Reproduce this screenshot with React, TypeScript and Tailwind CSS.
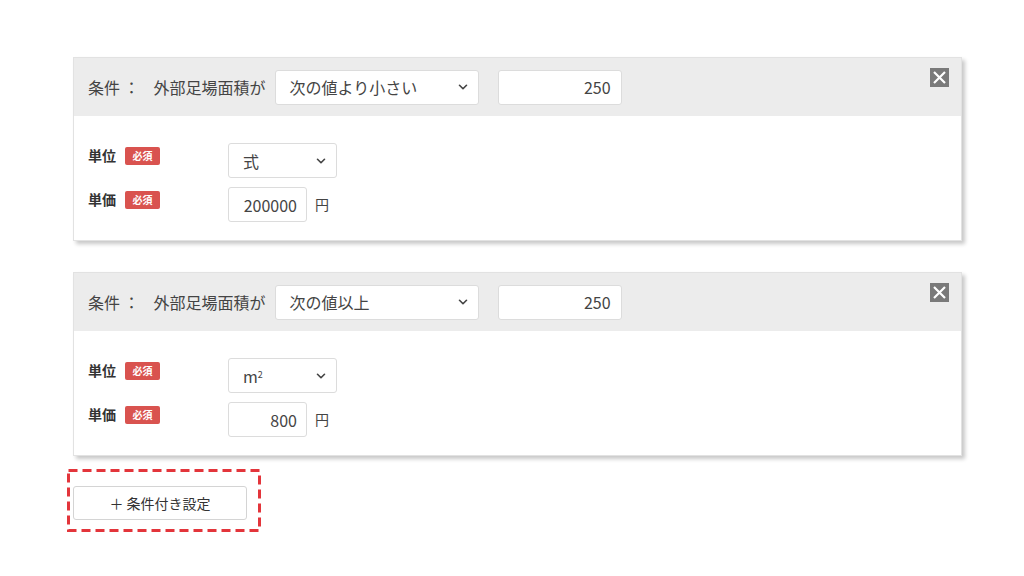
import { ChevronDown } from "lucide-react";

const font = { fontFamily: '"Noto Sans CJK JP", "Noto Sans", sans-serif' };

function CloseBox() {
  return (
    <svg width="19" height="19" viewBox="0 0 19 19" className="block">
      <rect x="0" y="0" width="19" height="19" fill="#7a7a7a" />
      <path d="M4 4 L15 15 M15 4 L4 15" stroke="#fff" strokeWidth="2.2" />
    </svg>
  );
}

function FakeSelect({ value, width }: { value: React.ReactNode; width: string }) {
  return (
    <div
      className={`flex h-[35px] items-center justify-between rounded-[3px] border border-[#dcdcdc] bg-white pl-[14px] pr-[8px] text-[16px] text-[#444] ${width}`}
    >
      <span>{value}</span>
      <ChevronDown size={14} strokeWidth={2.8} color="#444" />
    </div>
  );
}

function Badge() {
  return (
    <span className="ml-[9px] inline-flex h-[18px] w-[35px] items-center justify-center rounded-[2px] bg-[#d9534f] text-[10px] font-bold text-white">
      必須
    </span>
  );
}

function FieldLabel({ text }: { text: string }) {
  return (
    <div className="flex w-[140px] items-center pb-[10px]">
      <span className="text-[14px] font-bold">{text}</span>
      <Badge />
    </div>
  );
}

interface ConditionCardProps {
  operator: string;
  unit: React.ReactNode;
  price: string;
}

function ConditionCard({ operator, unit, price }: ConditionCardProps) {
  return (
    <div className="w-[889px] border border-[#e2e2e2] bg-white shadow-[3px_3px_4px_rgba(0,0,0,0.22)]">
      <div className="relative flex h-[58px] items-center bg-[#ececec] pl-[14px] text-[16px] text-[#444]">
        <span>条件 ：</span>
        <span className="ml-[14px]">外部足場面積が</span>
        <div className="ml-[9px]">
          <FakeSelect value={operator} width="w-[204px]" />
        </div>
        <div className="ml-[19px] flex h-[35px] w-[124px] items-center justify-end rounded-[3px] border border-[#dcdcdc] bg-white pr-[10px]">
          250
        </div>
        <div className="absolute right-[12px] top-[10px]">
          <CloseBox />
        </div>
      </div>
      <div className="flex flex-col gap-[9px] pl-[14px] pb-[18px] pt-[27px] text-[#333]">
        <div className="flex items-center">
          <FieldLabel text="単位" />
          <FakeSelect value={unit} width="w-[109px]" />
        </div>
        <div className="flex items-center">
          <FieldLabel text="単価" />
          <div className="flex h-[35px] w-[79px] items-center justify-end rounded-[3px] border border-[#dcdcdc] bg-white pr-[9px] text-[16px] text-[#444]">
            {price}
          </div>
          <span className="ml-[8px] text-[14px] text-[#444]">円</span>
        </div>
      </div>
    </div>
  );
}

export default function App() {
  return (
    <div className="min-h-[576px] w-[1024px] bg-white pl-[73px] pt-[57px]" style={font}>
      <div className="flex flex-col gap-[31px]">
        <ConditionCard operator="次の値より小さい" unit="式" price="200000" />
        <ConditionCard
          operator="次の値以上"
          unit={
            <span>
              m<sup className="text-[9px]">2</sup>
            </span>
          }
          price="800"
        />
      </div>
      <div className="relative -ml-[6px] mt-[13px] inline-block pb-[12px] pl-[6px] pr-[14px] pt-[17px]">
        <svg className="pointer-events-none absolute inset-0 h-full w-full" preserveAspectRatio="none">
          <rect
            x="1.5"
            y="1.5"
            width="calc(100% - 3px)"
            height="calc(100% - 3px)"
            fill="none"
            stroke="#e3353b"
            strokeWidth="3"
            strokeDasharray="9 5"
          />
        </svg>
        <button className="flex h-[34px] w-[174px] items-center justify-center rounded-[3px] border border-[#d4d4d4] bg-white text-[14px] text-[#333]">
          ＋ 条件付き設定
        </button>
      </div>
    </div>
  );
}
